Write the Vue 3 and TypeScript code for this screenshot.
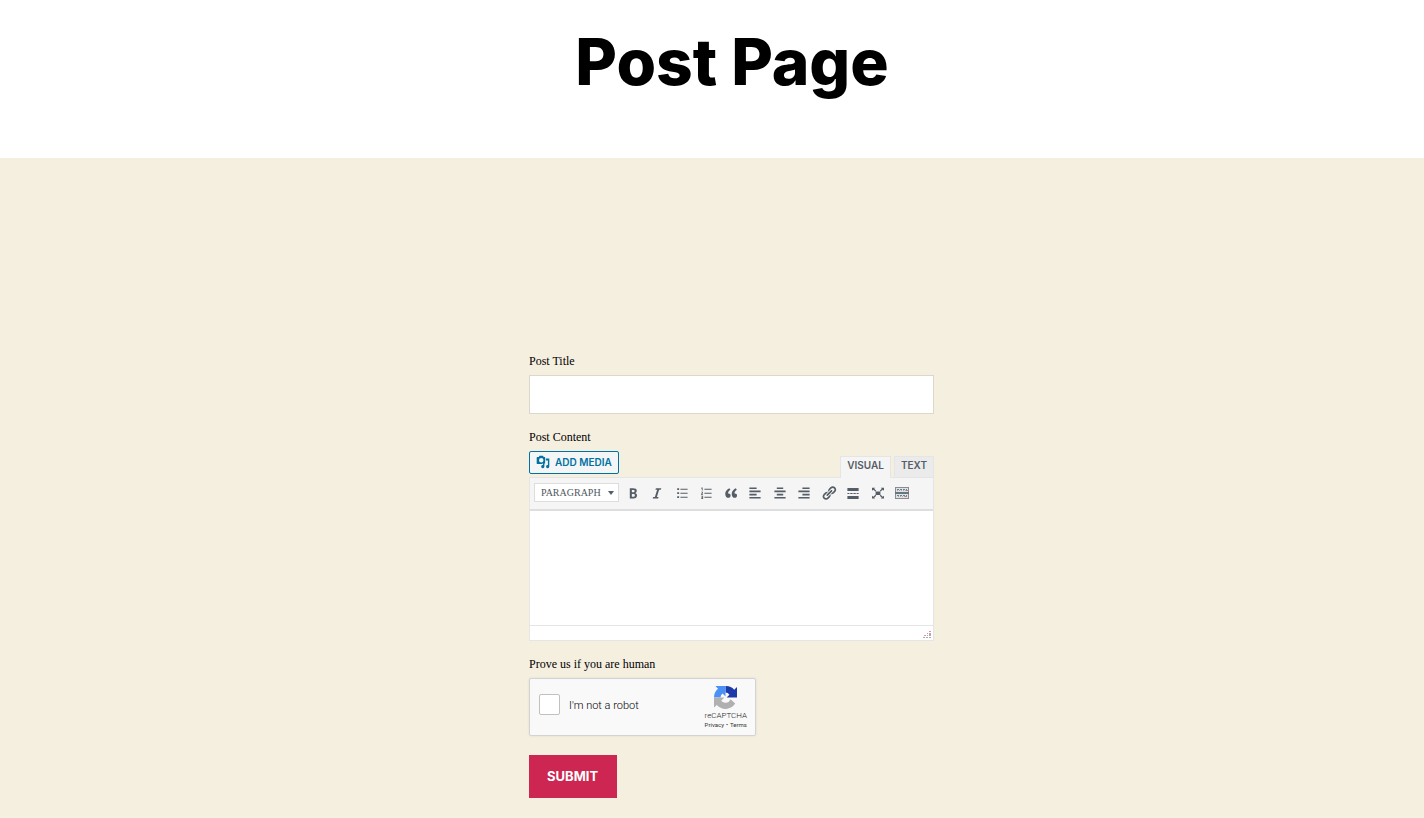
<script setup lang="ts">
import { ref } from 'vue'

interface Tool {
  name: string
  path: string
}

const title = ref('')
const content = ref('')
const human = ref(false)

const tools: Tool[] = [
  { name: 'Bold', path: 'M6 4v13h4.54c1.37 0 2.46-.33 3.26-1 .8-.66 1.2-1.58 1.2-2.77 0-.84-.17-1.51-.51-2.01s-.9-.85-1.67-1.03v-.09c.57-.1 1.02-.4 1.36-.9s.51-1.13.51-1.91c0-1.14-.39-1.98-1.17-2.5C12.75 4.26 11.5 4 9.78 4H6zm2.57 5.15V6.26h1.36c.73 0 1.27.11 1.61.32.34.22.51.58.51 1.07 0 .54-.16.92-.47 1.15s-.82.35-1.51.35h-1.5zm0 2.19h1.6c1.44 0 2.16.53 2.16 1.61 0 .6-.17 1.05-.51 1.34s-.86.43-1.57.43H8.57v-3.38z' },
  { name: 'Italic', path: 'M14.78 6h-2.13l-2.8 9h2.12l-.62 2H4.6l.62-2h2.14l2.8-9H8.03l.62-2h6.75z' },
  { name: 'Bulleted list', path: 'M4 4h2.4v2.4H4zM4 9h2.4v2.4H4zM4 14h2.4v2.4H4zM8 4.6h9v1.2H8zM8 9.6h9v1.2H8zM8 14.6h9v1.2H8z' },
  { name: 'Numbered list', path: 'M4.6 3h1.2v4H4.8V4.4l-.8.3v-1zM4 8.3h2.2v2L5 11.4h1.3v.9H3.7v-.9l1.5-1.6v-.6H4zM4 13.4h2.4v4H3.9v-.8h1.5v-.8H4.3V15h1.1v-.7H4zM8 4.6h9v1.2H8zM8 9.6h9v1.2H8zM8 14.6h9v1.2H8z' },
  { name: 'Blockquote', path: 'M9.49 13.22c0-.74-.2-1.38-.61-1.9-.62-.78-1.83-.88-2.53-.72-.29-1.65 1.11-3.75 2.92-4.65L7.88 4c-2.73 1.3-5.42 4.28-4.96 8.05C3.21 14.43 4.59 16 6.54 16c.85 0 1.56-.25 2.12-.75s.83-1.18.83-2.03zm8.05 0c0-.74-.2-1.38-.61-1.9-.63-.78-1.83-.88-2.53-.72-.29-1.65 1.11-3.75 2.92-4.65L15.93 4c-2.73 1.3-5.41 4.28-4.95 8.05.29 2.38 1.66 3.95 3.61 3.95.85 0 1.56-.25 2.12-.75s.83-1.18.83-2.03z' },
  { name: 'Align left', path: 'M12 5V3H3v2h9zm5 4V7H3v2h14zm-5 4v-2H3v2h9zm5 4v-2H3v2h14z' },
  { name: 'Align center', path: 'M14 5V3H6v2h8zm3 4V7H3v2h14zm-3 4v-2H6v2h8zm3 4v-2H3v2h14z' },
  { name: 'Align right', path: 'M17 5V3H8v2h9zm0 4V7H3v2h14zm0 4v-2H8v2h9zm0 4v-2H3v2h14z' },
  { name: 'Insert link', path: 'M17.74 2.76c1.68 1.69 1.68 4.41 0 6.1l-1.53 1.52c-1.12 1.12-2.7 1.47-4.14 1.09l2.62-2.61.76-.77.76-.76c.84-.84.84-2.2 0-3.04-.84-.85-2.2-.85-3.04 0l-.77.76-3.38 3.38c-.37-1.44-.02-3.02 1.1-4.14l1.52-1.53c1.69-1.68 4.42-1.68 6.1 0zM8.59 13.43l5.34-5.34c.42-.42.42-1.1 0-1.52-.44-.43-1.13-.39-1.53 0l-5.33 5.34c-.42.42-.42 1.1 0 1.52.44.43 1.13.39 1.52 0zm-.76 2.29l4.14-4.15c.38 1.44.03 3.02-1.09 4.14l-1.52 1.53c-1.69 1.68-4.41 1.68-6.1 0-1.68-1.68-1.68-4.42 0-6.1l1.53-1.52c1.12-1.12 2.7-1.47 4.14-1.1l-4.14 4.15c-.85.84-.85 2.2 0 3.05.84.84 2.2.84 3.04 0z' },
  { name: 'Read more', path: 'M3 3.800h14v3.700H3zM3 10h2.500v1.200H3zM6.500 10h3v1.200h-3zM10.500 10h3v1.200h-3zM14.500 10H17v1.200h-2.500zM3 13.700h14v3.700H3z' },
  { name: 'Fullscreen', path: 'M7 8h6v4.500H7zM2.500 3.500h4L5.300 4.700 7.800 7.200 6.800 8.200 4.100 5.800 2.500 7.200zM17.500 3.500v3.700l-1.600-1.400-2.700 2.400-1-1 2.500-2.500-1.200-1.200zM2.500 17v-3.700l1.600 1.400 2.700-2.400 1 1-2.500 2.500L6.500 17zM17.500 17h-4l1.200-1.200-2.500-2.500 1-1 2.700 2.400 1.600-1.400z' },
]
</script>

<template>
  <div class="page">
    <header class="masthead">
      <h1>Post Page</h1>
    </header>
    <main>
      <form class="post-form" @submit.prevent>
        <label class="caption" for="post-title">Post Title</label>
        <input id="post-title" v-model="title" class="title-input" type="text" />

        <label class="caption content-caption" for="post-content">Post Content</label>
        <div class="editor-head">
          <button type="button" class="media">
            <svg viewBox="0 0 20 20" aria-hidden="true">
              <path fill-rule="evenodd" d="M2 3h2l1-2h5l1 2h2v9H9.500a3 3 0 0 0-1 1H2a1 1 0 0 1-1-1V4a1 1 0 0 1 1-1zM7.500 4.300a3.200 3.200 0 1 0 0 6.400 3.200 3.200 0 0 0 0-6.400z" />
              <path d="M14 5h5v11.500a2.300 2.300 0 1 1-2-2.300V8h-3zM12 10v6.500a2.300 2.300 0 1 1-2-2.300V12z" />
            </svg>
            Add Media
          </button>
          <div class="tabs">
            <button type="button" class="tab active">Visual</button>
            <button type="button" class="tab">Text</button>
          </div>
        </div>
        <div class="editor">
          <div class="toolbar">
            <button type="button" class="format">Paragraph <i class="caret"></i></button>
            <div class="tools">
              <button v-for="tool in tools" :key="tool.name" type="button" class="tool" :aria-label="tool.name">
                <svg viewBox="0 0 20 20"><path :d="tool.path" /></svg>
              </button>
              <button type="button" class="tool" aria-label="Toolbar toggle">
                <svg viewBox="0 0 16 16" class="kitchen">
                  <rect x="1.500" y="2.500" width="13" height="5" fill="#dfe2e5" stroke="#8a8c90" />
                  <rect x="1.500" y="8.500" width="13" height="5" fill="#dfe2e5" stroke="#8a8c90" />
                  <path d="M3 4.500h10M3 10.500h10" stroke="#6c7f8b" stroke-dasharray="2 1" />
                  <path d="M3 5.500h9M4 11.500h7" stroke="#a9a3ab" stroke-dasharray="1 1" />
                  <path d="M1 7.500h14M1 8.500h14" stroke="#66757e" />
                  <path d="M12 5.500h2M11 11.500h2" stroke="#c9757a" />
                </svg>
              </button>
            </div>
          </div>
          <textarea id="post-content" v-model="content"></textarea>
          <div class="status">
            <svg viewBox="0 0 8 8" aria-hidden="true">
              <path d="M6 1.500h2M4 3.500h1m1 0h2M1 5.500h2m1 0h1m1 0h2" stroke="#d69a9d" />
              <path d="M0 7.500h2m1 0h2m1 0h2M6 4.500h2" stroke="#a2a9c2" />
            </svg>
          </div>
        </div>

        <div class="caption human-caption">Prove us if you are human</div>
        <div class="captcha">
          <input id="human" v-model="human" type="checkbox" />
          <label for="human">I'm not a robot</label>
          <div class="brand">
            <svg viewBox="0 0 64 64" aria-hidden="true">
              <path fill="#1c3aa9" d="M64 32V3l-7.700 7.200A32 32 0 0 0 32 0v18a14 14 0 0 1 11 6l-8 8z" />
              <path fill="#4a90f5" d="M32 0H4l7.200 7.700A32 32 0 0 0 0 32h18a14 14 0 0 1 6-11l8 8z" />
              <path fill="#b0b0b0" d="M0 32v28l7.700-7.200A32 32 0 0 0 59 49L46 37a15 15 0 0 1-26 4l9-9z" />
            </svg>
            <span class="brand-name">reCAPTCHA</span>
            <span class="links"><a href="#privacy">Privacy</a><span>•</span><a href="#terms">Terms</a></span>
          </div>
        </div>
        <button type="submit" class="submit">Submit</button>
      </form>
    </main>
  </div>
</template>

<style>
body {
  margin: 0;
  background: #f5efe0;
}
</style>

<style scoped>
* {
  box-sizing: border-box;
}
button {
  margin: 0;
  padding: 0;
  border: 0;
  background: none;
  cursor: pointer;
}
.page {
  min-height: 100vh;
  background: #f5efe0;
  color: #000;
  font-family: "Liberation Serif", serif;
}
.masthead {
  padding: 22px 0 56px 40px;
  background: #fff;
  text-align: center;
}
h1 {
  margin: 0;
  font: 800 64px/80px Inter, sans-serif;
}
main {
  padding: 196px 0 20px 39px;
}
.post-form {
  display: flex;
  flex-direction: column;
  width: 100%;
  max-width: 405px;
  margin: 0 auto;
}
.caption {
  margin-bottom: 6px;
  font-size: 12px;
  line-height: 15px;
}
.content-caption,
.human-caption {
  margin-top: 16px;
}
.title-input {
  height: 39px;
  padding: 0 12px;
  border: 1px solid #dcd7ca;
  border-radius: 0;
  background: #fff;
  font: 14px Inter, sans-serif;
}
.editor-head {
  display: flex;
  justify-content: space-between;
}
.media {
  display: flex;
  align-items: center;
  gap: 5px;
  height: 23px;
  margin-bottom: 3px;
  padding: 0 6px 1px;
  border: 1px solid #0071a1;
  border-radius: 2px;
  background: #f3f5f6;
  color: #0071a1;
  font: 600 10px Inter, sans-serif;
  text-transform: uppercase;
}
.media svg {
  width: 14px;
  height: 14px;
  fill: currentColor;
}
.tabs {
  display: flex;
  align-items: flex-end;
  gap: 3px;
}
.tab {
  height: 21px;
  padding: 0 6px 4px;
  border: 1px solid #e5e5e5;
  border-bottom: 0;
  background: #ebebeb;
  color: #555d66;
  font: 600 10px Inter, sans-serif;
  text-transform: uppercase;
}
.tab.active {
  z-index: 1;
  height: 22px;
  margin-bottom: -1px;
  padding-bottom: 5px;
  background: #f5f5f5;
}
.editor {
  border: 1px solid #e5e5e5;
  background: #fff;
}
.toolbar {
  display: flex;
  align-items: center;
  height: 33px;
  padding: 0 4px 2px;
  border-bottom: 2px solid #dedede;
  background: #f5f5f5;
}
.format {
  display: flex;
  align-items: center;
  justify-content: space-between;
  width: 85px;
  height: 19px;
  padding: 0 4px 0 6px;
  border: 1px solid #ddd;
  background: #fff;
  color: #50575e;
  font: 10px "Liberation Serif", serif;
  text-transform: uppercase;
}
.caret {
  border: 3px solid transparent;
  border-top: 4px solid #555d66;
  border-bottom: 0;
}
.tools {
  display: flex;
  justify-content: space-between;
  width: 285px;
  margin-left: 6px;
}
.tool {
  display: flex;
  width: 16px;
  height: 16px;
}
.tool svg {
  width: 16px;
  height: 16px;
  fill: #555d66;
}
.tool .kitchen {
  fill: none;
}
textarea {
  display: block;
  width: 100%;
  height: 114px;
  padding: 8px;
  border: 0;
  outline: 0;
  resize: none;
  background: #fff;
  font: 14px "Liberation Serif", serif;
}
.status {
  display: flex;
  align-items: flex-end;
  justify-content: flex-end;
  height: 15px;
  padding: 2px;
  border-top: 1px solid #e5e5e5;
}
.status svg {
  width: 8px;
  height: 8px;
}
.captcha {
  display: flex;
  align-items: center;
  width: 227px;
  height: 58px;
  padding: 0 8px 0 9px;
  border: 1px solid #d3d3d3;
  border-radius: 2px;
  background: #f9f9f9;
  box-shadow: 0 0 3px rgba(0, 0, 0, 0.08);
  color: #000;
  font: 300 11px Roboto, sans-serif;
}
.captcha input {
  appearance: none;
  width: 21px;
  height: 21px;
  margin: 0 9px 5px 0;
  border: 1px solid #c1c1c1;
  border-radius: 2px;
  background: #fff;
}
.captcha label {
  margin-bottom: 4px;
}
.brand {
  display: flex;
  flex-direction: column;
  align-items: center;
  margin-left: auto;
  color: #222;
}
.brand svg {
  width: 23px;
  height: 23px;
}
.brand-name {
  margin-top: 2px;
  font-size: 8px;
  line-height: 10px;
}
.links {
  display: flex;
  gap: 2px;
  font-size: 6px;
  font-weight: 400;
  line-height: 8px;
}
.links a {
  color: #333;
  text-decoration: none;
}
.submit {
  align-self: flex-start;
  height: 43px;
  margin-top: 19px;
  padding: 0 19px 1px 18px;
  background: #cd2653;
  color: #fff;
  font: 700 13px Inter, sans-serif;
  text-transform: uppercase;
}
</style>
